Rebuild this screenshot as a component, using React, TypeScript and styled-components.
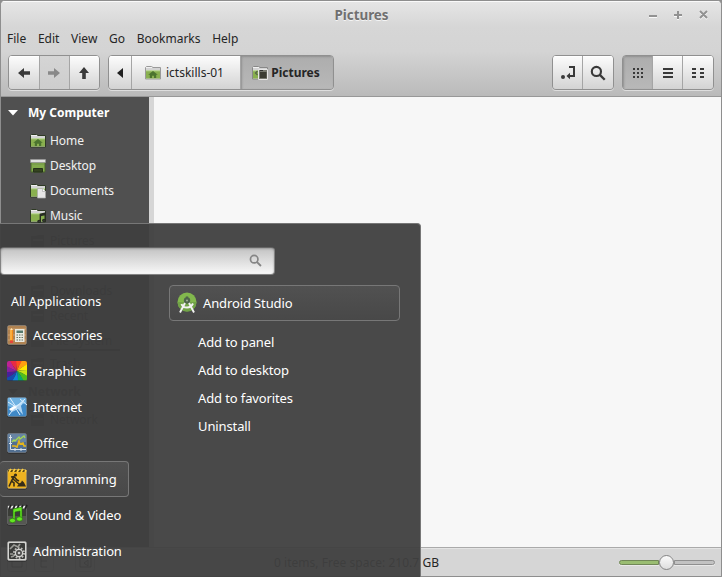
import React from "react";
import styled, { createGlobalStyle, css } from "styled-components";

const GlobalStyle = createGlobalStyle`
  * { box-sizing: border-box; }
  body { margin: 0; background: #8e8e8e; overflow: hidden; }
`;

const Desktop = styled.div`
  position: relative;
  width: 722px;
  height: 577px;
  overflow: hidden;
  font-family: "Noto Sans", sans-serif;
  font-size: 12px;
  line-height: 18px;
  color: #252525;
  white-space: nowrap;
`;

const Window = styled.div`
  display: flex;
  flex-direction: column;
  width: 722px;
  height: 577px;
  border: 1px solid #8e8e8e;
  border-radius: 5px 5px 0 0;
  background: #d6d6d6;
  overflow: hidden;
`;

const Header = styled.header`
  height: 96px;
  flex: none;
  border-bottom: 1px solid #989898;
  box-shadow: inset 0 1px #fafafa;
  background: linear-gradient(#e6e6e6 0, #d6d6d6 26px, #d4d4d4 50px, #bababa 95px);
`;

const TitleBar = styled.div`
  display: grid;
  grid-template-columns: 1fr auto 1fr;
  align-items: center;
  height: 26px;
  padding: 1px 13px 0 14px;
`;

const Title = styled.div`
  grid-column: 2;
  font-size: 13.4px;
  font-weight: 700;
  color: #707070;
  text-shadow: 0 1px #f4f4f4;
`;

const WindowControls = styled.div`
  display: flex;
  justify-content: flex-end;
`;

const MenuBar = styled.nav`
  display: flex;
  gap: 11.7px;
  height: 24px;
  padding: 3px 6px 0;
`;

const Toolbar = styled.div`
  display: flex;
  padding: 4px 7px 0;
  gap: 8px;
`;

const ButtonGroup = styled.div<{ $push?: boolean }>`
  display: flex;
  height: 35px;
  border: 1px solid #909090;
  border-radius: 4px;
  overflow: hidden;
  box-shadow: 0 1px #dedede;
  ${(p) => p.$push && css`margin-left: auto;`}
`;

const ToolButton = styled.button<{ $width: number; $inset?: number; $state?: "pressed" | "disabled" }>`
  display: flex;
  align-items: center;
  justify-content: center;
  gap: 5px;
  width: ${(p) => p.$width}px;
  height: 33px;
  padding: 0 ${(p) => p.$inset ?? 0}px 0 0;
  border: 0;
  font: inherit;
  color: #252525;
  background: linear-gradient(#fcfcfc, #d3d3d3);
  box-shadow: inset 0 1px #fff;
  & + & { border-left: 1px solid #a5a5a5; }
  ${(p) => p.$state === "pressed" && css`
    gap: 3px;
    font-weight: 700;
    background: linear-gradient(#adadad, #b8b8b8);
    box-shadow: inset 1px 1px 2px #909090;
  `}
  ${(p) => p.$state === "disabled" && css`
    background: linear-gradient(#d5d5d5, #cdcdcd);
    box-shadow: none;
  `}
`;

const Body = styled.div`
  display: flex;
  flex: 1;
  min-height: 0;
`;

const Sidebar = styled.aside`
  width: 148px;
  background: #505050;
  color: #f0f0f0;
`;

const SectionTitle = styled.div<{ $dim?: boolean }>`
  display: flex;
  align-items: center;
  gap: 10px;
  height: 31px;
  padding-left: 7px;
  font-weight: 700;
  color: ${(p) => (p.$dim ? "#000" : "#fff")};
`;

const Place = styled.div<{ $dim?: boolean }>`
  display: flex;
  align-items: center;
  gap: 4px;
  height: 25px;
  padding-left: 29px;
  letter-spacing: -0.08px;
  color: ${(p) => (p.$dim ? "#000" : "#f0f0f0")};
`;

const Usage = styled.div`
  height: 2px;
  width: 70px;
  margin: -4px 0 0 49px;
  background: #000;
`;

const Splitter = styled.div`
  width: 5px;
  background: #d6d6d6;
`;

const FileArea = styled.main`
  flex: 1;
  background: #f7f7f7;
`;

const StatusBar = styled.footer`
  display: flex;
  align-items: center;
  flex: none;
  height: 29px;
  padding: 1px 6px 0 6px;
  border-top: 1px solid #aaa;
  box-shadow: inset 0 1px #e4e4e4;
`;

const StatusIcons = styled.div`
  display: flex;
  width: 267px;
`;

const StatusText = styled.span`
  letter-spacing: 0.03px;
`;

const Slider = styled.div`
  display: flex;
  align-items: center;
  width: 96px;
  margin-left: auto;
`;

const SliderTrack = styled.div<{ $filled?: boolean; $width: number }>`
  width: ${(p) => p.$width}px;
  height: 5px;
  border: 1px solid ${(p) => (p.$filled ? "#718758" : "#8f8f8f")};
  border-radius: ${(p) => (p.$filled ? "3px 0 0 3px" : "0 3px 3px 0")};
  background: ${(p) => (p.$filled ? "#9abd72" : "#c2c2c2")};
  box-shadow: 0 1px #e8e8e8;
`;

const SliderKnob = styled.div`
  width: 15px;
  height: 15px;
  border: 1px solid #858585;
  border-radius: 50%;
  background: linear-gradient(#fafafa, #dedede);
`;

const StartMenu = styled.section`
  position: absolute;
  left: 0;
  top: 223px;
  display: flex;
  flex-direction: column;
  width: 421px;
  height: 354px;
  border: 1px solid #777;
  border-width: 1px 1px 0 0;
  border-radius: 0 4px 0 0;
  background: rgba(63, 63, 63, 0.95);
  color: #fff;
  font-size: 13px;
  letter-spacing: -0.12px;
`;

const SearchBox = styled.div`
  display: flex;
  align-items: center;
  justify-content: flex-end;
  width: 275px;
  height: 28px;
  margin-top: 23px;
  padding: 0 12px 2px;
  border: 1px solid #838383;
  border-top: 1px solid #666;
  border-radius: 4px;
  background: linear-gradient(#c3c3c3, #f8f8f8);
  box-shadow: inset 0 1px 2px #999;
`;

const Columns = styled.div`
  display: flex;
  margin-top: 10px;
`;

const Categories = styled.div`
  width: 169px;
`;

const AllApps = styled.div`
  height: 32px;
  padding: 8px 0 0 11px;
  font-size: 12.6px;
  letter-spacing: 0;
`;

const Category = styled.div<{ $active?: boolean }>`
  display: flex;
  align-items: center;
  gap: 5px;
  width: 129px;
  height: 36px;
  padding-left: 6px;
  border: 1px solid transparent;
  border-left: 0;
  border-radius: 4px;
  ${(p) => p.$active && css`
    border-color: #777;
    background: linear-gradient(#505050, #484848);
  `}
`;

const AppEntry = styled.div`
  display: flex;
  align-items: center;
  gap: 5px;
  width: 231px;
  height: 36px;
  margin-bottom: 7px;
  padding-left: 6px;
  border: 1px solid #777;
  border-radius: 4px;
  background: linear-gradient(#515151, #484848);
`;

const ContextAction = styled.div`
  height: 28px;
  padding: 5px 0 0 29px;
`;

type FolderKind = "home" | "desktop" | "docs" | "music" | "pics";

const DimFolder = () => (
  <svg width="16" height="16" viewBox="0 0 16 16">
    <path d="M1 3h5l2-1h6v12H1z" fill="#000" opacity=".7" />
    <path d="M3 6h10v2H3z" fill="#505050" />
  </svg>
);

function Folder({ kind, edge = "#2f3a25" }: { kind: FolderKind; edge?: string }) {
  if (kind === "desktop")
    return (
      <svg width="16" height="16" viewBox="0 0 16 16">
        <path d="M1 4.500h14v9.500H1z" fill="#83ab4c" stroke="#4b642d" />
        <path d="M.5 1.500h15v3h-15z" fill="#e2e2e2" stroke="#999" strokeWidth=".6" />
        <path d="M2 5h12v2H2z" fill="#7a9f4a" />
        <path d="M3.500 10.500h9v3.500h-9z" fill="#35441f" stroke="#24301a" />
      </svg>
    );
  return (
    <svg width="16" height="16" viewBox="0 0 16 16">
      <path d="M.5 2.500l1-1h5L8 2.500h7.500v11.500H.5z" fill="#f0f0f0" stroke={edge} />
      <path d="M1 3.500h14v1H1z" fill="#b5b5b5" />
      <path d="M1 5.500h14v8H1z" fill="#89b04f" />
      <path d="M1 5.300h14v1H1z" fill="#bcd79a" />
      {kind === "home" && <path d="M8 6L3.200 9.800h1.600V13h2.200v-2.200h2V13h2.200V9.800h1.600z" fill="#4c742f" />}
      {kind === "docs" && <path d="M7.500 5.500h5l3 3v6.500h-8z" fill="#e6e6e6" stroke="#aaa" strokeWidth=".7" />}
      {kind === "docs" && <path d="M12.500 5.500v3h3" fill="#fff" stroke="#aaa" strokeWidth=".7" />}
      {kind === "music" && (
        <g fill="none" stroke="#272c22" strokeWidth="1.400">
          <path d="M10.300 13V6.200l4.900-1V12M10.300 7.500l4.900-1" />
          <ellipse cx="9.200" cy="13.400" rx="1.300" ry="1" fill="#555" />
          <ellipse cx="14" cy="12.400" rx="1.300" ry="1" fill="#555" />
        </g>
      )}
      {kind === "pics" && (
        <g>
          <path d="M6.500 4.500h9v10h-9z" fill="#77796f" stroke="#e6e6e6" />
          <path d="M8 7h6.500v6H8z" fill="#3b3c33" />
          <path d="M8 5h3v1H8z" fill="#333" />
          <path d="M5.500 6L3.500 8l2 2" fill="none" stroke="#566448" strokeWidth="1.200" />
        </g>
      )}
    </svg>
  );
}

const Arrow = ({ turn, color }: { turn: number; color: string }) => (
  <svg width="14" height="14" viewBox="0 0 14 14">
    <path transform={`rotate(${turn} 7 7)`} d="M1 7l6-5v3.200h6v3.600H7V12z" fill={color} />
  </svg>
);

const Search = ({ size, color }: { size: number; color: string }) => (
  <svg width={size} height={size} viewBox="0 0 15 15">
    <circle cx="6" cy="6" r="4.300" fill="none" stroke={color} strokeWidth="2" />
    <path d="M9 9l4.800 4.800" stroke={color} strokeWidth="2.200" />
  </svg>
);

const IconTile = ({ fill, children }: { fill: string; children: React.ReactNode }) => (
  <svg width="22" height="22" viewBox="0 0 22 22">
    <rect x="1" y="1.500" width="20" height="20" rx="2" fill="#252525" />
    <rect x="1.500" y="1.500" width="19" height="19" rx="1.500" fill={fill} stroke="#bbb" strokeOpacity=".35" />
    {children}
  </svg>
);

const wheel = ["#ff4b22", "#ff9e10", "#ffe500", "#c7e315", "#50bd1d", "#08a873", "#1089da", "#174dad", "#48209b", "#8720a0", "#bd2294", "#e92a43"];

const Accessories = () => (
  <IconTile fill="#b08352">
    <path d="M2 5h18M2 11h18M2 16h18" stroke="#cda272" />
    <path d="M4 6l1.500-2L7 6v11H4z" fill="#f38b16" />
    <path d="M5 6v10" stroke="#ffd069" />
    <path d="M4 16.500h3v2.500H4z" fill="#e5463f" />
    <path d="M4 6l1.500-2L7 6z" fill="#ffe7ba" />
    <rect x="9" y="5" width="9.500" height="13" fill="#e9eae2" />
    <path d="M10.500 6.500h6.500v2.500h-6.500z" fill="#54796d" />
    <path d="M10.500 11h7M10.500 13.500h7M10.500 16h7" stroke="#65705f" strokeDasharray="1.500 1" />
  </IconTile>
);

const Graphics = () => (
  <svg width="22" height="22" viewBox="0 0 22 22">
    <defs><clipPath id="tile"><rect x="1" y="1" width="20" height="20" rx="2" /></clipPath></defs>
    <g clipPath="url(#tile)">
      {wheel.map((c, i) => (
        <path key={c} d="M11 11Q9 1 11-8Q18-7 21-4Q13 3 11 11Z" fill={c} transform={`rotate(${i * 30} 11 11)`} />
      ))}
      <path d="M1 20.500h20" stroke="#303030" strokeOpacity=".6" />
    </g>
  </svg>
);

const Internet = () => (
  <IconTile fill="#3f89c7">
    <path d="M2 2h18v5L7 12l-5-2z" fill="#70b2e2" />
    <path d="M2 6l8 5 9-8M9 11l5 8M9 11L3 19M4 2l6 9M14 3l7 6" fill="none" stroke="#dcefff" strokeWidth="1" />
    <path d="M8 10l5-2 6-5-4 7 2 9-5-6-6 3z" fill="#d7edff" opacity=".75" />
    <path d="M3 13l5-3 3 1-6 4z" fill="#fff" />
  </IconTile>
);

const Office = () => (
  <IconTile fill="#516f91">
    <path d="M2 2h18v8H2z" fill="#6784a3" />
    <path d="M4.500 3v14.500H20M3 5.500h3M3 11.500h3M9 16v3M15 16v3" stroke="#dae2e9" fill="none" />
    <path d="M6 10l2-2 1 1 4-4 1 2 4-3 1 2" stroke="#a7d850" strokeWidth="1.300" fill="none" />
    <path d="M6 14h3l2 1 2-6 1 3 3-1 1 3h2" stroke="#e6b61c" strokeWidth="1.600" fill="none" />
  </IconTile>
);

const Programming = () => (
  <IconTile fill="#edb321">
    <path d="M2 2h18v2H2z" fill="#594616" />
    <path d="M3 4l2-3M7 4l2-3M11 4l2-3M15 4l2-3M19 4l1-2" stroke="#ffd03c" strokeWidth="1.700" />
    <g fill="#362d18">
      <circle cx="9.500" cy="7" r="1.600" />
      <path d="M11 18.500l2-3 2-1 1-2 2 2 2 4z" />
    </g>
    <path d="M8 8.500L5.500 13 8 15v3.500M5.500 13L3 18.500M5 9l3-.5 3 3.500 2 1M7 11l6 5" fill="none" stroke="#362d18" strokeWidth="1.600" />
  </IconTile>
);

const SoundVideo = () => (
  <IconTile fill="#3b3d38">
    <path d="M2 2h18v2.500H2z" fill="#eee" />
    <path d="M5 1L3 5M9 1L7 5M13 1l-2 4M17 1l-2 4M21 1l-2 4" stroke="#222" strokeWidth="1.800" />
    <path d="M2 12h18v8H2z" fill="#555752" />
    <g fill="#63e622" stroke="#236c0d" strokeWidth=".6">
      <path d="M7 5l9-2v12h-2V7L9 8v9H7z" />
      <ellipse cx="6.500" cy="16.500" rx="3" ry="2.200" />
      <ellipse cx="13.500" cy="15" rx="3" ry="2.200" />
    </g>
  </IconTile>
);

const Administration = () => (
  <IconTile fill="#d5d5d2">
    <rect x="3" y="3" width="16" height="16" rx="1" fill="#3b3c3a" />
    <circle cx="13" cy="13" r="5" fill="none" stroke="#bcbcb8" strokeWidth="2" strokeDasharray="1.700 1.400" />
    <circle cx="13" cy="13" r="3.600" fill="#484846" stroke="#d5d5d2" strokeWidth="1.300" />
    <circle cx="13" cy="13" r="1.300" fill="#ccc" />
    <path d="M4 9l4-4 4 2 2-3M4 14h3M5 17l3-1" stroke="#9c9c97" strokeWidth="1.700" fill="none" />
  </IconTile>
);

const AndroidStudio = () => (
  <svg width="22" height="24" viewBox="0 0 22 24">
    <circle cx="11" cy="11" r="9.500" fill="#82b84d" />
    <path d="M1.500 11H20.500A9.500 9.500 0 0 1 11 20.500 9.500 9.500 0 0 1 1.500 11z" fill="#71a347" />
    <path d="M11 5.500v3" stroke="#4d5c4b" strokeWidth="2.400" />
    <circle cx="11" cy="9.500" r="3.200" fill="#4f654b" />
    <circle cx="11" cy="9.500" r="1" fill="#9eb497" />
    <path d="M9 12L4 21.500M13 12l5 9.500M5.500 13q1 3.500 5.500 3.500 4 0 6-4" fill="none" stroke="#f2f2f2" strokeWidth="1.900" />
  </svg>
);

const Triangle = ({ color }: { color: string }) => (
  <svg width="10" height="6" viewBox="0 0 10 6"><path d="M0 0h10L5 5.500z" fill={color} /></svg>
);

const categories = [
  { name: "Accessories", Icon: Accessories },
  { name: "Graphics", Icon: Graphics },
  { name: "Internet", Icon: Internet },
  { name: "Office", Icon: Office },
  { name: "Programming", Icon: Programming },
  { name: "Sound & Video", Icon: SoundVideo },
  { name: "Administration", Icon: Administration },
];

export default function App() {
  return (
    <Desktop>
      <GlobalStyle />
      <Window>
        <Header>
          <TitleBar>
            <Title>Pictures</Title>
            <WindowControls>
              <svg width="60" height="14" viewBox="0 0 60 14" fill="none" strokeWidth="2">
                <path d="M1 9h8M26 8h8M30 4v8M52 4l7 7M59 4l-7 7" stroke="#f8f8f8" />
                <path d="M1 8h8M26 7h8M30 3v8M52 3l7 7M59 3l-7 7" stroke="#929292" />
              </svg>
            </WindowControls>
          </TitleBar>
          <MenuBar>
            <span>File</span><span>Edit</span><span>View</span><span>Go</span><span>Bookmarks</span><span>Help</span>
          </MenuBar>
          <Toolbar>
            <ButtonGroup>
              <ToolButton $width={30}><Arrow turn={0} color="#393939" /></ToolButton>
              <ToolButton $width={30} $inset={1} $state="disabled"><Arrow turn={180} color="#898989" /></ToolButton>
              <ToolButton $width={30} $inset={1}><Arrow turn={90} color="#393939" /></ToolButton>
            </ButtonGroup>
            <ButtonGroup>
              <ToolButton $width={22}>
                <svg width="6" height="10" viewBox="0 0 6 10"><path d="M6 0v10L0 5z" fill="#202020" /></svg>
              </ToolButton>
              <ToolButton $width={109} $inset={3}><Folder kind="home" edge="#999" />ictskills-01</ToolButton>
              <ToolButton $width={93} $inset={2} $state="pressed"><Folder kind="pics" edge="#888" />Pictures</ToolButton>
            </ButtonGroup>
            <ButtonGroup $push>
              <ToolButton $width={29}>
                <svg width="16" height="16" viewBox="0 0 16 16" fill="none" stroke="#393939" strokeWidth="2">
                  <path d="M9 2h5v9H8" />
                  <path d="M6.500 11L10 7.700v6.600z" fill="#393939" stroke="none" />
                  <circle cx="3" cy="12" r="2" fill="#393939" stroke="none" />
                </svg>
              </ToolButton>
              <ToolButton $width={31}><Search size={16} color="#393939" /></ToolButton>
            </ButtonGroup>
            <ButtonGroup>
              <ToolButton $width={29} $state="pressed">
                <svg width="12" height="12" viewBox="0 0 12 12" stroke="#393939" strokeWidth="2" strokeDasharray="2 2">
                  <path d="M1 2h10M1 6h10M1 10h10" />
                </svg>
              </ToolButton>
              <ToolButton $width={30}>
                <svg width="12" height="12" viewBox="0 0 12 12" stroke="#393939" strokeWidth="2"><path d="M1 2h10M1 6h10M1 10h10" /></svg>
              </ToolButton>
              <ToolButton $width={31}>
                <svg width="12" height="12" viewBox="0 0 12 12" stroke="#393939" strokeWidth="2"><path d="M0 2h4M8 2h4M0 6h4M8 6h4M0 10h4M8 10h4" /></svg>
              </ToolButton>
            </ButtonGroup>
          </Toolbar>
        </Header>
        <Body>
          <Sidebar>
            <SectionTitle><Triangle color="#fff" />My Computer</SectionTitle>
            <Place><Folder kind="home" />Home</Place>
            <Place><Folder kind="desktop" />Desktop</Place>
            <Place><Folder kind="docs" />Documents</Place>
            <Place><Folder kind="music" />Music</Place>
            {["Pictures", "Videos", "Downloads", "Recent", "File System"].map((name) => (
              <Place key={name} $dim><DimFolder />{name}</Place>
            ))}
            <Usage />
            <Place $dim><DimFolder />Trash</Place>
            <SectionTitle $dim><Triangle color="#000" />Network</SectionTitle>
            <Place $dim><DimFolder />Network</Place>
          </Sidebar>
          <Splitter />
          <FileArea />
        </Body>
        <StatusBar>
          <StatusIcons>
            <svg width="90" height="20" viewBox="0 0 90 20" fill="none" stroke="#303030">
              <rect x=".5" y=".5" width="19" height="18" rx="3" strokeOpacity=".3" />
              <rect x="27.500" y=".5" width="19" height="18" rx="3" strokeOpacity=".3" />
              <rect x="68.500" y=".5" width="19" height="18" rx="3" strokeOpacity=".3" />
              <path d="M5 5h10v9H5zM34 4v10h6M34 8h6M73 5h11v9H73zM81 7l-4 3 4 3z" />
            </svg>
          </StatusIcons>
          <StatusText>0 items, Free space: 210.7 GB</StatusText>
          <Slider>
            <SliderTrack $filled $width={40} />
            <SliderKnob />
            <SliderTrack $width={41} />
          </Slider>
        </StatusBar>
      </Window>
      <StartMenu>
        <SearchBox><Search size={13} color="#858585" /></SearchBox>
        <Columns>
          <Categories>
            <AllApps>All Applications</AllApps>
            {categories.map(({ name, Icon }) => (
              <Category key={name} $active={name === "Programming"}><Icon />{name}</Category>
            ))}
          </Categories>
          <div>
            <AppEntry><AndroidStudio />Android Studio</AppEntry>
            <ContextAction>Add to panel</ContextAction>
            <ContextAction>Add to desktop</ContextAction>
            <ContextAction>Add to favorites</ContextAction>
            <ContextAction>Uninstall</ContextAction>
          </div>
        </Columns>
      </StartMenu>
    </Desktop>
  );
}
